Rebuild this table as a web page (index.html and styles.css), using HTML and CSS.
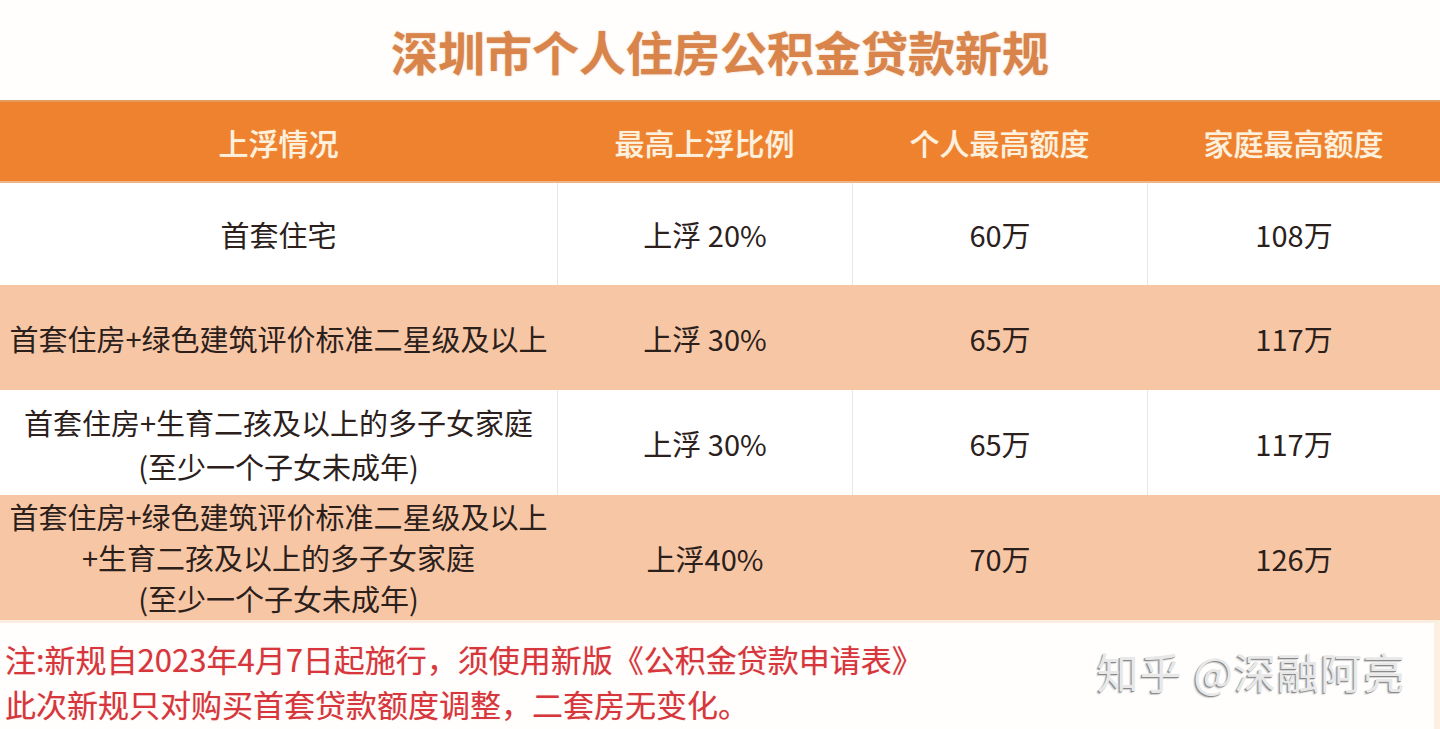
FILE: index.html
```html
<!DOCTYPE html>
<html lang="zh-CN">
<head>
<meta charset="utf-8">
<title>深圳市个人住房公积金贷款新规</title>
<link rel="stylesheet" href="styles.css">
</head>
<body>
<div class="page">
  <h1 class="title">深圳市个人住房公积金贷款新规</h1>
  <div class="table">
    <div class="row head">
      <div class="cell">上浮情况</div>
      <div class="cell">最高上浮比例</div>
      <div class="cell">个人最高额度</div>
      <div class="cell">家庭最高额度</div>
    </div>
    <div class="row r1">
      <div class="cell">首套住宅</div>
      <div class="cell">上浮 20%</div>
      <div class="cell">60万</div>
      <div class="cell">108万</div>
    </div>
    <div class="row r2 alt">
      <div class="cell">首套住房+绿色建筑评价标准二星级及以上</div>
      <div class="cell">上浮 30%</div>
      <div class="cell">65万</div>
      <div class="cell">117万</div>
    </div>
    <div class="row r3">
      <div class="cell multi">首套住房+生育二孩及以上的多子女家庭<br>(至少一个子女未成年)</div>
      <div class="cell">上浮 30%</div>
      <div class="cell">65万</div>
      <div class="cell">117万</div>
    </div>
    <div class="row r4 alt">
      <div class="cell multi tight">首套住房+绿色建筑评价标准二星级及以上<br>+生育二孩及以上的多子女家庭<br>(至少一个子女未成年)</div>
      <div class="cell">上浮40%</div>
      <div class="cell">70万</div>
      <div class="cell">126万</div>
    </div>
  </div>
  <div class="footer">
    <div class="notes">
      <p>注:新规自2023年4月7日起施行，须使用新版《公积金贷款申请表》</p>
      <p>此次新规只对购买首套贷款额度调整，二套房无变化。</p>
    </div>
    <div class="watermark">知乎 @深融阿亮</div>
  </div>
</div>
</body>
</html>
```

FILE: styles.css
```css
* { box-sizing: border-box; }
html, body {
  margin: 0;
  padding: 0;
  background: #ffffff;
}
body {
  font-family: "Noto Sans CJK SC", "Noto Sans", "Liberation Sans", sans-serif;
  width: 1440px;
  height: 729px;
  overflow: hidden;
}
.page {
  width: 1440px;
  height: 729px;
  display: flex;
  flex-direction: column;
  background: #fffefc;
}
.title {
  margin: 0;
  height: 100px;
  display: flex;
  align-items: center;
  justify-content: center;
  font-size: 47px;
  font-weight: 700;
  color: #d8844a;
  text-shadow: 0 0 2px rgba(210, 128, 70, 0.5);
}
.table {
  display: flex;
  flex-direction: column;
}
.row {
  display: grid;
  grid-template-columns: 557px 295px 295px 1fr;
}
.cell {
  display: flex;
  align-items: center;
  justify-content: center;
  text-align: center;
  font-size: 29px;
  color: #2b201b;
  border-left: 1px solid #ece6e0;
}
.cell:first-child { border-left: none; }
.head {
  height: 83px;
  background: #ee822f;
  border-top: 2px solid #e59a5f;
  border-bottom: 2px solid #f0b486;
}
.head .cell {
  color: #fdf1dd;
  font-size: 30px;
  font-weight: 500;
  border-left: none;
  text-shadow: 0 0 1px rgba(255, 240, 220, 0.6);
}
.r1 { height: 102px; background: #ffffff; }
.r2 { height: 105px; }
.r3 { height: 105px; background: #ffffff; }
.r4 { height: 125px; }
.alt { background: #f7c7a5; }
.alt .cell { border-left-color: transparent; }
.multi { line-height: 44px; padding-top: 2px; }
.multi.tight { line-height: 41px; padding-top: 0; }
.footer {
  flex: 1;
  display: flex;
  align-items: flex-start;
  justify-content: space-between;
  border-top: 3px solid #fbeee0;
  border-right: 6px solid #fcf0e0;
}
.notes {
  padding: 13px 0 0 5px;
}
.notes p {
  margin: 0;
  font-size: 31px;
  line-height: 45px;
  color: #d6363c;
  white-space: nowrap;
  text-shadow: 0 0 1px rgba(216, 52, 59, 0.35);
}
.watermark {
  margin: 20px 28px 0 0;
  font-size: 42px;
  line-height: 56px;
  color: #e8e8e8;
  letter-spacing: 1px;
  text-shadow: -1px 1px 0 #8a8a8a, -2px 2px 1px rgba(120, 120, 120, 0.35);
}
```
